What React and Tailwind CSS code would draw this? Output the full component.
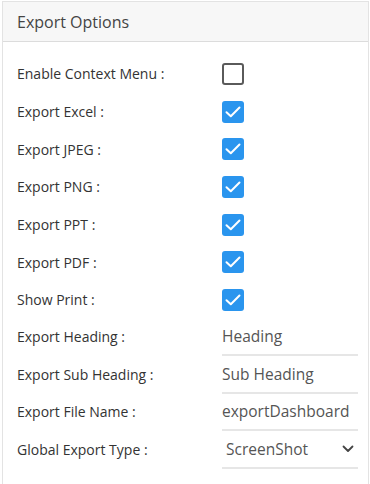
import React from "react";

const Check = ({ checked }) =>
  checked ? (
    <div className="w-[22px] h-[22px] rounded-[3px] bg-[#2a95ee] flex items-center justify-center">
      <svg width="16" height="12" viewBox="0 0 16 12" fill="none">
        <path d="M1.5 6.2 L5.8 10.2 L14.5 1.5" stroke="white" strokeWidth="2" strokeLinecap="round" strokeLinejoin="round" />
      </svg>
    </div>
  ) : (
    <div className="w-[22px] h-[22px] rounded-[3px] border-2 border-[#5a5a5a] bg-white" />
  );

const checks = [
  ["Enable Context Menu :", false],
  ["Export Excel :", true],
  ["Export JPEG :", true],
  ["Export PNG :", true],
  ["Export PPT :", true],
  ["Export PDF :", true],
  ["Show Print :", true],
];

const inputs = [
  ["Export Heading :", "Heading"],
  ["Export Sub Heading :", "Sub Heading"],
  ["Export File Name :", "exportDashboard"],
];

export default function App() {
  return (
    <div className="w-[370px] h-[484px] bg-white pt-[1px] pl-[2px] pr-[1px]" style={{ fontFamily: "'Open Sans', sans-serif" }}>
      <div className="h-full border-l border-r border-t border-[#e3e3e3] flex flex-col">
        <div className="h-[40px] bg-[#f7f7f7] border-b border-[#dcdcdc] flex items-center pl-[14px] text-[16px] text-[#444]">
          Export Options
        </div>
        <div className="flex flex-col pt-[13px]">
          {checks.map(([label, c]) => (
            <div key={label} className="flex items-center h-[37.7px]">
              <div className="w-[219px] pl-[14px] text-[14px] text-[#333]">{label}</div>
              <Check checked={c} />
            </div>
          ))}
          {inputs.map(([label, v]) => (
            <div key={label} className="flex items-end h-[37.5px]">
              <div className="w-[219px] pl-[14px] text-[14px] text-[#333] pb-[9px]">{label}</div>
              <div className="w-[136px] border-b-2 border-[#e6e6e6] pb-[8px] text-[15.5px] text-[#555] leading-[20px] whitespace-nowrap">{v}</div>
            </div>
          ))}
          <div className="flex items-end h-[37.5px]">
            <div className="w-[219px] pl-[14px] text-[14px] text-[#333] pb-[9px]">Global Export Type :</div>
            <div className="w-[136px] border-b-2 border-[#e6e6e6] pb-[8px] pl-[4px] pr-[4px] text-[15.5px] text-[#555] leading-[20px] flex items-center justify-between">
              <span>ScreenShot</span>
              <svg width="12" height="8" viewBox="0 0 12 8" fill="none">
                <path d="M1.5 1.5 L6 6 L10.5 1.5" stroke="#444" strokeWidth="1.8" strokeLinecap="round" strokeLinejoin="round" />
              </svg>
            </div>
          </div>
        </div>
      </div>
    </div>
  );
}
